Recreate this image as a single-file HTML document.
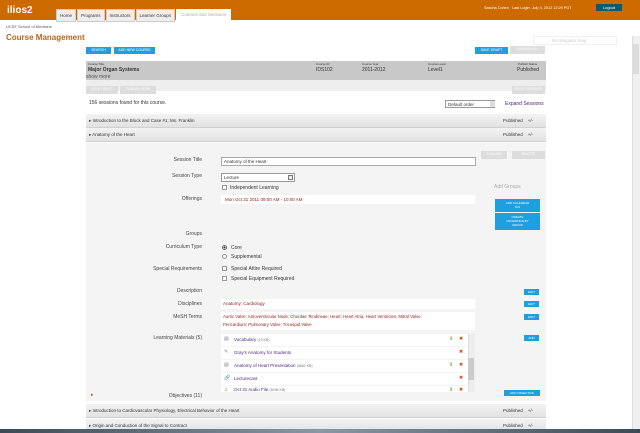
<!DOCTYPE html>
<html><head><meta charset="utf-8"><style>
*{margin:0;padding:0;box-sizing:border-box}
body{width:640px;height:433px;overflow:hidden;background:#fff;font-family:"Liberation Sans",sans-serif;position:relative;color:#333}
.a{position:absolute}
.t{font-size:5px;white-space:nowrap}
.btn{position:absolute;background:#1ea0e0;color:#fff;font-size:3.5px;text-align:center;line-height:7px;height:7px}
.gb{position:absolute;background:#ddd;color:#fff;font-size:3.5px;text-align:center;line-height:7px;height:8px}
.row{position:absolute;left:86px;width:460px;height:14px;background:linear-gradient(#f3f3f3,#e2e2e2);border-bottom:1px solid #d0d0d0;font-size:4.5px;line-height:14px}
.lbl{position:absolute;font-size:5px;text-align:right;width:120px;left:82px;color:#444}
.btn2{position:absolute;background:#1ea0e0;color:#fff;font-size:3px;text-align:center;line-height:6px;width:15px;height:6px;left:524px}
.lm{position:absolute;left:221px;width:248px;height:12px;background:#fff;font-size:4.5px;line-height:12px;color:#4b2a7a;padding-left:13px}
</style></head><body>
<div class="a" style="left:0;top:0;width:640px;height:20px;background:#cc6a00"></div>
<div class="a t" style="left:7px;top:5px;font-size:10px;color:#fff;font-weight:bold">ilios2</div>
<div class="a" style="left:56px;top:9px;display:flex;gap:1px;font-size:4.5px">
<div style="background:#eee;padding:3px 3px;color:#333;border:1px solid #ccc">Home</div>
<div style="background:#eee;padding:3px 3px;border:1px solid #ccc">Programs</div>
<div style="background:#eee;padding:3px 3px;border:1px solid #ccc">Instructors</div>
<div style="background:#eee;padding:3px 3px;border:1px solid #ccc">Learner Groups</div>
<div style="background:#fff;padding:3px 5px;color:#aaa;height:12px">Courses and Sessions</div>
</div>
<div class="a t" style="left:484px;top:6px;color:#fff;font-size:3.8px">Sascha Cohen &nbsp; Last Login: July 3, 2012 12:29 PDT</div>
<div class="a" style="left:596px;top:4px;width:26px;height:7px;background:#0c5a6e;color:#fff;font-size:4px;text-align:center;line-height:7px">Logout</div>
<div class="a t" style="left:6px;top:24px;font-size:4px;color:#555">UCSF School of Medicine</div>
<div class="a t" style="left:6px;top:33px;font-size:8px;font-weight:bold;color:#b8651a">Course Management</div>
<div class="a" style="left:533px;top:36px;width:84px;height:9px;border:1px solid #f0f0f0;font-size:4.5px;color:#ccc;padding-left:18px;line-height:8px">Rectangular Snip</div>
<div class="a" style="left:632px;top:36px;width:8px;height:397px;background:#f0f0f0;border-left:1px solid #ddd"></div>
<div class="a" style="left:633px;top:44px;width:6px;height:30px;background:#dcdcdc"></div>
<div class="btn" style="left:86px;top:47px;width:25px">SEARCH</div>
<div class="btn" style="left:114px;top:47px;width:41px">ADD NEW COURSE</div>
<div class="btn" style="left:475px;top:47px;width:33px">SAVE DRAFT</div>
<div class="gb" style="left:510px;top:46px;width:35px">PUBLISH ALL</div>
<div class="a" style="left:86px;top:61px;width:460px;height:30px;background:#eee"></div>
<div class="a" style="left:86px;top:61px;width:460px;height:19px;background:#c8c8c8"></div>
<div class="a t" style="left:88px;top:62px;font-size:3px">Course Title</div>
<div class="a t" style="left:88px;top:67px;font-weight:bold">Major Organ Systems</div>
<div class="a t" style="left:316px;top:62px;font-size:3px">Course ID</div>
<div class="a t" style="left:316px;top:67px">IDS102</div>
<div class="a t" style="left:362px;top:62px;font-size:3px">Course Year</div>
<div class="a t" style="left:362px;top:67px">2011-2012</div>
<div class="a t" style="left:428px;top:62px;font-size:3px">Course Level</div>
<div class="a t" style="left:428px;top:67px">Level1</div>
<div class="a t" style="left:518px;top:62px;font-size:3px">Publish Status</div>
<div class="a t" style="left:517px;top:67px">Published</div>
<div class="a t" style="left:86px;top:74px;color:#555">show more</div>
<div class="gb" style="left:86px;top:86px;width:32px">SAVE DRAFT</div>
<div class="gb" style="left:120px;top:86px;width:36px">PUBLISH NOW</div>
<div class="gb" style="left:512px;top:86px;width:33px">RESET SESSION</div>
<div class="a t" style="left:89px;top:100px">156 sessions found for this course.</div>
<div class="a" style="left:445px;top:100px;width:50px;height:8px;border:1px solid #999;font-size:4.5px;line-height:7px;padding-left:2px">Default order</div>
<div class="a" style="left:490px;top:101px;width:5px;height:6px;background:#ddd"></div>
<div class="a t" style="left:505px;top:101px;color:#4b2a7a">Expand Sessions</div>
<div class="row" style="top:114px"><span style="padding-left:3px">▸ Introduction to the Block and Case #1: Ms. Franklin</span><span class="a" style="left:417px">Published &nbsp;&nbsp; +/-</span></div>
<div class="row" style="top:128px"><span style="padding-left:3px">▸ Anatomy of the Heart</span><span class="a" style="left:417px">Published &nbsp;&nbsp; +/-</span></div>
<div class="a" style="left:86px;top:143px;width:460px;height:258px;background:#f4f4f4"></div>
<div class="gb" style="left:481px;top:151px;width:26px">PUBLISH</div>
<div class="gb" style="left:512px;top:151px;width:33px">DELETE</div>
<div class="lbl" style="top:157px">Session Title</div>
<div class="a" style="left:221px;top:157px;width:255px;height:9px;border:1px solid #aaa;background:#fff;font-size:4.5px;line-height:8px;padding-left:2px">Anatomy of the Heart</div>
<div class="lbl" style="top:173px">Session Type</div>
<div class="a" style="left:221px;top:173px;width:74px;height:9px;border:1px solid #999;background:#fff;font-size:4.5px;line-height:8px;padding-left:2px">Lecture</div>
<div class="a" style="left:288px;top:175px;width:5px;height:5px;border:1px solid #777;background:#eee"></div>
<div class="a" style="left:222px;top:185px;width:5px;height:5px;border:1px solid #999;background:#fff"></div>
<div class="a t" style="left:230px;top:185px">Independent Learning</div>
<div class="a t" style="left:494px;top:184px;color:#aaa">Add Groups</div>
<div class="lbl" style="top:196px">Offerings</div>
<div class="a" style="left:221px;top:195px;width:254px;height:9px;background:#fff;font-size:4.5px;line-height:9px;color:#8b1a1a;padding-left:4px">Mon Oct 31 2011 09:00 AM - 10:00 AM</div>
<div class="btn" style="left:495px;top:199px;width:45px;height:13px;font-size:3px;line-height:4px;padding-top:2px">ADD CALENDAR<br>ICS</div>
<div class="btn" style="left:495px;top:213px;width:45px;height:17px;font-size:3px;line-height:4px;padding-top:2px">CREATE<br>OFFERINGS BY<br>GROUP</div>
<div class="lbl" style="top:231px">Groups</div>
<div class="lbl" style="top:244px">Curriculum Type</div>
<div class="a" style="left:222px;top:245px;width:5px;height:5px;border:1px solid #666;border-radius:50%;background:radial-gradient(#333 40%,#fff 45%)"></div>
<div class="a t" style="left:231px;top:245px">Core</div>
<div class="a" style="left:222px;top:254px;width:5px;height:5px;border:1px solid #999;border-radius:50%;background:#fff"></div>
<div class="a t" style="left:231px;top:254px">Supplemental</div>
<div class="lbl" style="top:266px">Special Requirements</div>
<div class="a" style="left:222px;top:266px;width:5px;height:5px;border:1px solid #999;background:#fff"></div>
<div class="a t" style="left:231px;top:266px">Special Attire Required</div>
<div class="a" style="left:222px;top:276px;width:5px;height:5px;border:1px solid #999;background:#fff"></div>
<div class="a t" style="left:231px;top:276px">Special Equipment Required</div>
<div class="lbl" style="top:288px">Description</div>
<div class="btn2" style="top:289px">EDIT</div>
<div class="lbl" style="top:301px">Disciplines</div>
<div class="a" style="left:221px;top:299px;width:254px;height:10px;background:#fff;font-size:4.5px;line-height:10px;color:#8b1a1a;padding-left:2px">Anatomy; Cardiology</div>
<div class="btn2" style="top:301px">EDIT</div>
<div class="lbl" style="top:314px">MeSH Terms</div>
<div class="a" style="left:221px;top:312px;width:254px;height:18px;background:#fff;font-size:4.3px;line-height:8px;color:#8b1a1a;padding:1px 2px">Aortic Valve; Atrioventricular Node; Chordae Tendineae; Heart; Heart Atria; Heart Ventricles; Mitral Valve;<br>Pericardium; Pulmonary Valve; Tricuspid Valve</div>
<div class="btn2" style="top:314px">EDIT</div>
<div class="lbl" style="top:335px">Learning Materials (5)</div>
<div class="btn2" style="top:335px">ADD</div>
<div class="lm" style="top:334px">Vocabulary <span style="color:#777;font-size:3.5px">(13 KB)</span></div>
<div class="lm" style="top:347px">Gray's Anatomy for Students</div>
<div class="lm" style="top:360px">Anatomy of Heart Presentation <span style="color:#777;font-size:3.5px">(5652 KB)</span></div>
<div class="lm" style="top:373px">Lecturecast</div>
<div class="lm" style="top:386px;height:6px;line-height:8px;overflow:hidden">Oct 31 Audio File <span style="color:#777;font-size:3.5px">(8496 KB)</span></div>
<div class="a t" style="left:224px;top:336px;color:#888">▤</div>
<div class="a t" style="left:224px;top:349px;color:#888">✎</div>
<div class="a t" style="left:224px;top:362px;color:#888">▤</div>
<div class="a t" style="left:224px;top:375px;color:#2a4aa0">🔗</div>
<div class="a t" style="left:224px;top:387px;color:#6a8a2a">♫</div>
<div class="a t" style="left:449px;top:336px;color:#8ab030">⬇</div><div class="a t" style="left:459px;top:336px;color:#d05020">✖</div>
<div class="a t" style="left:459px;top:349px;color:#d05020">✖</div>
<div class="a t" style="left:449px;top:362px;color:#8ab030">⬇</div><div class="a t" style="left:459px;top:362px;color:#d05020">✖</div>
<div class="a t" style="left:459px;top:375px;color:#d05020">✖</div>
<div class="a t" style="left:449px;top:387px;color:#8ab030">⬇</div><div class="a t" style="left:459px;top:387px;color:#d05020">✖</div>
<div class="a" style="left:468px;top:334px;width:7px;height:58px;background:#eee;border-left:1px solid #ddd"></div>
<div class="a" style="left:468px;top:358px;width:6px;height:22px;background:#ccc"></div>
<div class="a t" style="left:91px;top:392px;color:#c05010">▸</div>
<div class="lbl" style="top:393px">Objectives (11)</div>
<div class="btn" style="left:504px;top:390px;width:36px;height:6px;line-height:6px;font-size:3px">ADD OBJECTIVE</div>
<div class="row" style="top:404px"><span style="padding-left:3px">▸ Introduction to Cardiovascular Physiology, Electrical Behavior of the Heart</span><span class="a" style="left:417px">Published &nbsp;&nbsp; +/-</span></div>
<div class="row" style="top:419px"><span style="padding-left:3px">▸ Origin and Conduction of the Signal to Contract</span><span class="a" style="left:417px">Published &nbsp;&nbsp; +/-</span></div>
<div class="a" style="left:0;top:429px;width:640px;height:4px;background:linear-gradient(90deg,#3a4a58,#8898a8,#3a4a58)"></div>
</body></html>
